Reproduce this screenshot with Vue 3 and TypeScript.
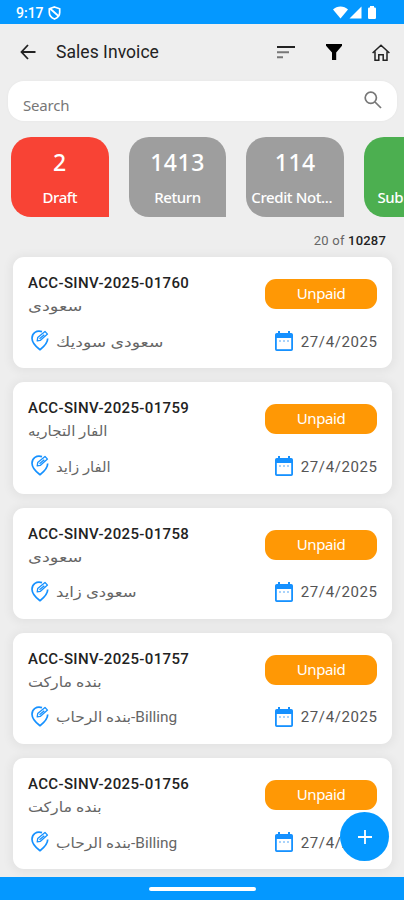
<script setup lang="ts">
interface Tile { count: string; label: string; tone: string }
interface Invoice { id: string; customer: string; address: string; customerScale: number; addressScale: number }

const tiles: Tile[] = [
  { count: '2', label: 'Draft', tone: 'red' },
  { count: '1413', label: 'Return', tone: 'grey' },
  { count: '114', label: 'Credit Not...', tone: 'grey wide' },
  { count: '', label: 'Submitted', tone: 'green' },
]

const invoices: Invoice[] = [
  { id: 'ACC-SINV-2025-01760', customer: 'سعودى', address: 'سعودى سوديك', customerScale: 1.27, addressScale: 1.23 },
  { id: 'ACC-SINV-2025-01759', customer: 'الفار التجاريه', address: 'الفار زايد', customerScale: 1.08, addressScale: 1.06 },
  { id: 'ACC-SINV-2025-01758', customer: 'سعودى', address: 'سعودى زايد', customerScale: 1.27, addressScale: 1.18 },
  { id: 'ACC-SINV-2025-01757', customer: 'بنده ماركت', address: 'بنده الرحاب-Billing', customerScale: 1.13, addressScale: 1.1 },
  { id: 'ACC-SINV-2025-01756', customer: 'بنده ماركت', address: 'بنده الرحاب-Billing', customerScale: 1.13, addressScale: 1.1 },
]
</script>

<template>
  <div class="screen">
    <div class="status">
      <span class="clock">9:17</span>
      <svg class="shield" width="13" height="14" viewBox="0 0 13 14" fill="none" stroke="#fff" stroke-width="1.7">
        <path d="M6.5 1 11.7 2.8V6.5c0 3-2 5.2-5.2 6.5C3.3 11.7 1.3 9.5 1.3 6.5V2.8z" /><path d="m2 2.5 9 8" />
      </svg>
      <svg class="signals" width="44" height="14" viewBox="0 0 44 14" fill="#fff">
        <path d="M0 3.4C4-.5 11-.5 15 3.4L7.5 12.5z" /><path d="M16.5 12.5h12V.5z" />
        <path d="M37 0h4v1.5h.8q1.2 0 1.2 1.2v9q0 1.3-1.2 1.3h-5.6q-1.2 0-1.2-1.3v-9q0-1.2 1.2-1.2h.8z" />
      </svg>
    </div>

    <header class="toolbar">
      <svg class="back" width="16" height="16" viewBox="0 0 16 16" fill="none" stroke="#222" stroke-width="1.8"><path d="M8 1 1.5 8 8 15M1.5 8H15.5" /></svg>
      <h1>Sales Invoice</h1>
      <svg class="sort" width="18" height="13" viewBox="0 0 18 13"><path d="M0 0h18v2H0z" fill="#222" /><path d="M0 5.2h12v2H0zM0 10.3h6v2H0z" fill="#777" /></svg>
      <svg class="filter" width="16" height="16" viewBox="0 0 16 16"><path d="M0 0h16v1.8L10.2 8.5V16H6V8.5L0 1.8z" fill="#000" /></svg>
      <svg class="home" width="18" height="17" viewBox="0 0 18 17" fill="none" stroke="#222" stroke-width="1.5"><path d="M.6 9 9 1.2 17.4 9M3 7.5v8.7h3.8v-5.5h4.4v5.5H15V7.5" /></svg>
    </header>

    <div class="search">
      <span>Search</span>
      <svg width="18" height="18" viewBox="0 0 18 18" fill="none" stroke="#777" stroke-width="1.7"><circle cx="6.8" cy="6.8" r="5.6" /><path d="m11 11 6 6" /></svg>
    </div>

    <div class="tiles">
      <div v-for="t in tiles" :key="t.label" class="tile" :class="t.tone">
        <span class="count">{{ t.count }}</span>
        <span class="label">{{ t.label }}</span>
      </div>
    </div>

    <div class="summary"><span>20 of</span> <b>10287</b></div>

    <main class="list">
      <article v-for="inv in invoices" :key="inv.id" class="card">
        <div class="left">
          <span class="id">{{ inv.id }}</span>
          <span class="customer" :style="{ transform: `scaleX(${inv.customerScale})` }">{{ inv.customer }}</span>
          <div class="place">
            <svg width="18" height="21" viewBox="0 0 18 21" fill="none" stroke="#1691ff" stroke-width="1.7" stroke-linejoin="round">
              <path d="M11 1.6C5.5-.3 1 3.3 1 8.2c0 4.5 3.6 8.2 8 11.5 4.4-3.3 7.8-7 7.7-11.3" />
              <path d="m6.2 10.8.5-3.2L14 1.5l2.5 2.6-7.3 6.3zM8.5 8.8l4.8-4" stroke-width="1.3" />
            </svg>
            <span class="address" :style="{ transform: `scaleX(${inv.addressScale})` }">{{ inv.address }}</span>
          </div>
        </div>
        <div class="right">
          <span class="badge">Unpaid</span>
          <div class="date">
            <svg width="18" height="20" viewBox="0 0 18 20">
              <path d="M3 0h2v2h8V0h2v2h1.2Q18 2 18 3.8v14.4q0 1.8-1.8 1.8H1.8Q0 20 0 18.2V3.8Q0 2 1.8 2H3z" fill="#1691ff" />
              <path d="M1.8 7h14.4v11.2H1.8z" fill="#fff" /><path d="M4 9h2v2H4zM8 9h2v2H8zM12 9h2v2h-2z" fill="#a9d3fb" />
            </svg>
            <span>27/4/2025</span>
          </div>
        </div>
      </article>
    </main>

    <div class="navbar"><i></i></div>
    <button class="fab" aria-label="Add"><svg width="14" height="14" viewBox="0 0 14 14" stroke="#fff" stroke-width="1.8"><path d="M7 0v14M0 7h14" /></svg></button>
  </div>
</template>

<style>
body { margin: 0; overflow: hidden; }
</style>

<style scoped>
.screen { position: relative; box-sizing: border-box; width: 404px; height: 900px; overflow: hidden; display: flex; flex-direction: column; background: #eee; font-family: Roboto, "DejaVu Sans", sans-serif; color: #555; }
svg { display: block; flex: none; }
.status { flex: none; height: 24px; display: flex; align-items: center; padding: 1px 27px 0 16px; box-sizing: border-box; background: #0498ff; }
.clock { color: #fff; font-size: 14px; font-weight: 500; width: 27px; }
.shield { margin-left: 5px; }
.signals { margin-left: auto; }
.toolbar { flex: none; height: 57px; box-sizing: border-box; display: flex; align-items: center; padding: 0 14px 1px 20px; }
h1 { margin: 0 auto 0 20px; font-size: 17.5px; line-height: 24px; font-weight: 400; color: #222; letter-spacing: .05px; white-space: nowrap; }
.filter { margin-left: 31px; }
.home { margin-left: 30px; }
.search { flex: none; height: 40px; margin: 0 7px 0 8px; padding: 0 15px; box-sizing: border-box; border-radius: 16px; background: #fff; display: flex; align-items: center; justify-content: space-between; box-shadow: 0 0 3px #0000000a; }
.search span { font-family: "Noto Sans", sans-serif; font-size: 15px; letter-spacing: -.2px; padding-top: 7px; color: #777; }
.search svg { margin-top: -2px; }
.tiles { flex: none; display: flex; gap: 20px; padding: 16px 0 0 11px; width: 500px; }
.tile { width: 97.7px; height: 80px; box-sizing: border-box; border-radius: 20px 20px 0 20px; display: flex; flex-direction: column; align-items: center; color: #fff; font-family: "Noto Sans", sans-serif; }
.red { background: #f84335; }
.grey { background: #9e9e9e; }
.green { background: #4caf50; }
.count { height: 32px; margin-top: 9px; font-size: 23px; line-height: 32px; font-weight: 500; letter-spacing: .5px; }
.label { margin-top: 8px; font-size: 15px; line-height: 22px; font-weight: 500; letter-spacing: -.4px; white-space: nowrap; }
.wide .label { margin-right: 7px; }
.summary { flex: none; height: 40px; box-sizing: border-box; padding: 14px 18px 0 0; text-align: right; font-size: 13px; line-height: 20px; letter-spacing: .2px; color: #666; }
.summary b { color: #222; font-weight: 500; }
.list { flex: none; display: flex; flex-direction: column; gap: 14px; padding: 0 12px 0 13px; }
.card { height: 111.3px; box-sizing: border-box; padding: 13px 15px; border-radius: 11px; background: #fff; display: flex; justify-content: space-between; box-shadow: 0 1px 10px 3px #0000000c; }
.left { display: flex; flex-direction: column; align-items: flex-start; }
.id { font-size: 15px; line-height: 26px; font-weight: 500; letter-spacing: .35px; color: #222; white-space: nowrap; }
.customer, .address { transform-origin: left center; white-space: nowrap; font-size: 14px; line-height: 20px; color: #666; }
.address { padding-top: 2px; }
.place { display: flex; align-items: center; gap: 7px; margin: 14px 0 0 3px; height: 21px; }
.right { display: flex; flex-direction: column; align-items: flex-end; }
.badge { margin-top: 9px; width: 112px; height: 30px; border-radius: 11px; background: #ff9805; color: #fff; font-family: "Noto Sans", sans-serif; font-size: 15px; line-height: 29px; letter-spacing: -.4px; text-align: center; }
.date { display: flex; align-items: center; gap: 8px; margin: 22px -.6px 0 0; height: 20px; font-size: 15px; letter-spacing: .6px; color: #555; }
.date span { padding-top: 1px; }
.navbar { flex: none; height: 23px; margin-top: 8px; background: #0498ff; display: flex; align-items: center; justify-content: center; }
.navbar i { width: 107px; height: 4px; border-radius: 2px; background: #fff; }
.fab { position: absolute; left: 340px; top: 812px; width: 49px; height: 49px; border: 0; border-radius: 50%; padding: 0; background: #0498ff; display: flex; align-items: center; justify-content: center; }
</style>
